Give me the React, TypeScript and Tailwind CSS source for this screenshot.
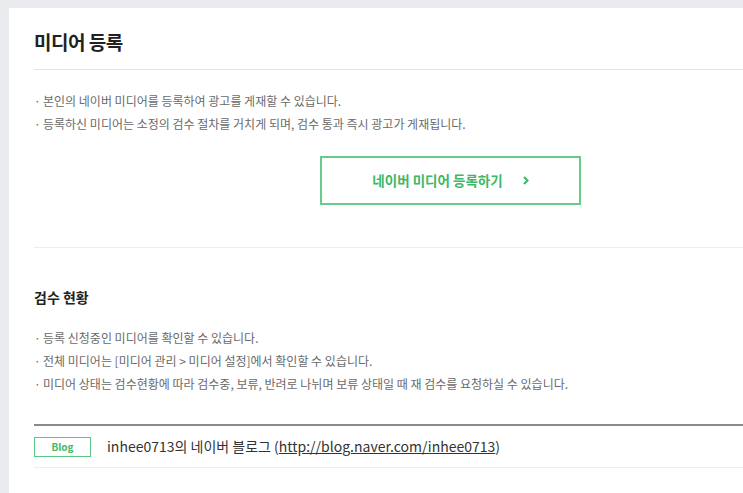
import React from "react";

const font = { fontFamily: '"Noto Sans CJK KR", "Noto Sans", sans-serif' };

const registerNotes = [
  "본인의 네이버 미디어를 등록하여 광고를 게재할 수 있습니다.",
  "등록하신 미디어는 소정의 검수 절차를 거치게 되며, 검수 통과 즉시 광고가 게재됩니다.",
];

const reviewNotes = [
  "등록 신청중인 미디어를 확인할 수 있습니다.",
  "전체 미디어는 [미디어 관리 > 미디어 설정]에서 확인할 수 있습니다.",
  "미디어 상태는 검수현황에 따라 검수중, 보류, 반려로 나뉘며 보류 상태일 때 재 검수를 요청하실 수 있습니다.",
];

function Notes({ items }: { items: string[] }) {
  return (
    <ul className="flex flex-col gap-[5px]">
      {items.map((t) => (
        <li key={t} className="flex text-[12px] leading-[18px] text-[#6a6a6a]">
          <span className="w-[9px] shrink-0">·</span>
          <span>{t}</span>
        </li>
      ))}
    </ul>
  );
}

export default function App() {
  return (
    <div className="min-h-[493px] bg-[#e9ebee] pt-[8px] pl-[9px]" style={font}>
      <div className="min-h-[485px] bg-white pl-[25px]">
        {/* Title */}
        <div className="h-[62px] border-b border-[#e4e4e4] pt-[19px]">
          <h1 className="text-[19px] font-semibold leading-[30px] tracking-[-0.5px] text-[#222]">
            미디어 등록
          </h1>
        </div>

        {/* Register section */}
        <div className="border-b border-[#eeeeee] pt-[22px] pb-[42px]">
          <Notes items={registerNotes} />
          <div className="mt-[23px] flex pl-[286px]">
            <button
              type="button"
              className="flex h-[49px] w-[261px] items-center justify-center gap-[20px] border-2 border-[#66cc8c] text-[13.5px] font-bold text-[#3cb867]"
            >
              네이버 미디어 등록하기
              <svg width="6" height="9" viewBox="0 0 6 9" fill="none">
                <path d="M1 1l3.5 3.5L1 8" stroke="#3cb867" strokeWidth="2" />
              </svg>
            </button>
          </div>
        </div>

        {/* Review status */}
        <div className="pt-[39px]">
          <h2 className="text-[14px] font-bold leading-[20px] text-[#222]">검수 현황</h2>
          <div className="mt-[22px]">
            <Notes items={reviewNotes} />
          </div>
        </div>

        <div className="mt-[31px] border-t-2 border-[#8a8a8a]">
          <div className="flex h-[42px] items-center gap-[16px] border-b border-[#eeeeee]">
            <span className="flex h-[20px] w-[57px] items-center justify-center border border-[#5ac784] text-[10px] font-bold text-[#3cb867]">
              Blog
            </span>
            <span className="text-[14px] text-[#333]">
              inhee0713의 네이버 블로그 (
              <a className="underline" href="#">
                http://blog.naver.com/inhee0713
              </a>
              )
            </span>
          </div>
        </div>
      </div>
    </div>
  );
}
